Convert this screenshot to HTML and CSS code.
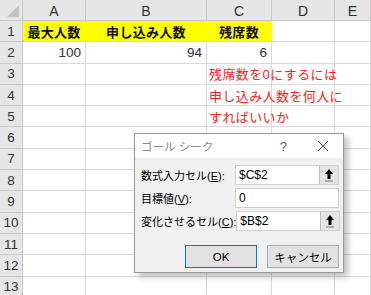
FILE: index.html
```html
<!DOCTYPE html>
<html lang="ja">
<head>
    <meta charset="UTF-8">
    <title>ゴール シーク</title>
    <link rel="stylesheet" href="styles.css">
</head>
<body>
    <div class="sheet">
        <div class="corner"><span class="tri"></span></div>
        <div class="colhead">A</div>
        <div class="colhead">B</div>
        <div class="colhead">C</div>
        <div class="colhead">D</div>
        <div class="colhead">E</div>

        <div class="rowhead">1</div>
        <div class="cell yellow">最大人数</div>
        <div class="cell yellow">申し込み人数</div>
        <div class="cell yellow">残席数</div>
        <div class="cell"></div>
        <div class="cell"></div>

        <div class="rowhead">2</div>
        <div class="cell num">100</div>
        <div class="cell num">94</div>
        <div class="cell num">6</div>
        <div class="cell"></div>
        <div class="cell"></div>

        <div class="rowhead">3</div>
        <div class="cell"></div>
        <div class="cell"></div>
        <div class="cell note">残席数を0にするには</div>
        <div class="cell"></div>
        <div class="cell"></div>

        <div class="rowhead">4</div>
        <div class="cell"></div>
        <div class="cell"></div>
        <div class="cell note">申し込み人数を何人に</div>
        <div class="cell"></div>
        <div class="cell"></div>

        <div class="rowhead">5</div>
        <div class="cell"></div>
        <div class="cell"></div>
        <div class="cell note">すればいいか</div>
        <div class="cell"></div>
        <div class="cell"></div>

        <div class="rowhead">6</div>
        <div class="cell"></div><div class="cell"></div><div class="cell"></div><div class="cell"></div><div class="cell"></div>
        <div class="rowhead">7</div>
        <div class="cell"></div><div class="cell"></div><div class="cell"></div><div class="cell"></div><div class="cell"></div>
        <div class="rowhead">8</div>
        <div class="cell"></div><div class="cell"></div><div class="cell"></div><div class="cell"></div><div class="cell"></div>
        <div class="rowhead">9</div>
        <div class="cell"></div><div class="cell"></div><div class="cell"></div><div class="cell"></div><div class="cell"></div>
        <div class="rowhead">10</div>
        <div class="cell"></div><div class="cell"></div><div class="cell"></div><div class="cell"></div><div class="cell"></div>
        <div class="rowhead">11</div>
        <div class="cell"></div><div class="cell"></div><div class="cell"></div><div class="cell"></div><div class="cell"></div>
        <div class="rowhead">12</div>
        <div class="cell"></div><div class="cell"></div><div class="cell"></div><div class="cell"></div><div class="cell"></div>
        <div class="rowhead">13</div>
        <div class="cell"></div><div class="cell"></div><div class="cell"></div><div class="cell"></div><div class="cell"></div>
    </div>

    <div class="dialog">
        <div class="titlebar">
            <span class="title">ゴール シーク</span>
            <span class="help">?</span>
            <span class="close">
                <svg width="12" height="12" viewBox="0 0 12 12"><path d="M1 1L11 11M11 1L1 11" stroke="#555" stroke-width="1"/></svg>
            </span>
        </div>
        <div class="body">
            <div class="field">
                <label>数式入力セル(<u>E</u>):</label>
                <div class="input">$C$2<span class="ref"><svg width="10" height="14" viewBox="0 0 10 14"><path d="M5 1L1 6H3.5V11H6.5V6H9Z" fill="#000"/><path d="M1 13H9" stroke="#777" stroke-width="1"/></svg></span></div>
            </div>
            <div class="field">
                <label>目標値(<u>V</u>):</label>
                <div class="input">0</div>
            </div>
            <div class="field">
                <label>変化させるセル(<u>C</u>):</label>
                <div class="input">$B$2<span class="ref"><svg width="10" height="14" viewBox="0 0 10 14"><path d="M5 1L1 6H3.5V11H6.5V6H9Z" fill="#000"/><path d="M1 13H9" stroke="#777" stroke-width="1"/></svg></span></div>
            </div>
            <div class="actions">
                <button class="btn default">OK</button>
                <button class="btn">キャンセル</button>
            </div>
        </div>
    </div>
</body>
</html>
```

FILE: styles.css
```css
body {
    margin: 0;
    font-family: "Liberation Sans", "Noto Sans CJK JP", sans-serif;
    background: #fff;
    overflow: hidden;
}

.sheet {
    display: grid;
    grid-template-columns: 23px 63px 121px 65px 63px 1fr;
    grid-template-rows: 21px repeat(13, 21.3px);
    width: 371px;
}

.corner,
.colhead,
.rowhead {
    background: #e6e6e6;
    color: #333;
    box-sizing: border-box;
    border-right: 1px solid #c8c8c8;
    border-bottom: 1px solid #c8c8c8;
    font-size: 14px;
}

.corner {
    position: relative;
}

.corner .tri {
    position: absolute;
    right: 3px;
    bottom: 3px;
    width: 0;
    height: 0;
    border-left: 12px solid transparent;
    border-bottom: 12px solid #c2c2c2;
}

.colhead {
    display: flex;
    align-items: center;
    justify-content: center;
    padding-top: 1px;
}

.rowhead {
    display: flex;
    align-items: center;
    justify-content: center;
    font-size: 13.5px;
}

.cell {
    box-sizing: border-box;
    border-right: 1px solid #dadada;
    border-bottom: 1px solid #dadada;
    font-size: 13px;
    display: flex;
    align-items: center;
    white-space: nowrap;
    overflow: visible;
    color: #222;
}

.yellow {
    background: #ffff00;
    border-right-color: #ffff00;
    border-bottom-color: #d8d8d8;
    justify-content: center;
    font-weight: bold;
    font-size: 13px;
    letter-spacing: 0.3px;
    color: #111;
}

.num {
    justify-content: flex-end;
    padding-right: 4px;
    font-size: 13.5px;
    color: #333;
}

.note {
    color: #ff2020;
    padding-left: 2px;
    letter-spacing: 0.4px;
    position: relative;
    z-index: 1;
}

.dialog {
    position: absolute;
    left: 134px;
    top: 133px;
    width: 210px;
    height: 140px;
    box-sizing: border-box;
    border: 1px solid #9a9a9a;
    background: #f0f0f0;
    box-shadow: 4px 4px 6px rgba(0, 0, 0, 0.25);
    z-index: 2;
    font-size: 12px;
    color: #000;
}

.titlebar {
    height: 24px;
    background: #fff;
    display: flex;
    align-items: center;
    padding-left: 6px;
    padding-right: 14px;
}

.title {
    flex: 1;
    color: #8a8a8a;
    font-size: 11.5px;
}

.help {
    color: #666;
    font-size: 13px;
    margin-right: 30px;
}

.close {
    display: flex;
}

.body {
    padding: 7px 4px 0 6px;
    display: flex;
    flex-direction: column;
    gap: 3px;
}

.field {
    display: flex;
    align-items: center;
    height: 20px;
}

.field label {
    flex: 1;
    font-size: 11px;
    white-space: nowrap;
}

.input {
    width: 104px;
    flex: none;
    height: 20px;
    box-sizing: border-box;
    background: #fff;
    border: 1px solid #d0d0d0;
    display: flex;
    align-items: center;
    padding-left: 3px;
    font-size: 12px;
    position: relative;
}

.ref {
    position: absolute;
    right: 0;
    top: 0;
    width: 19px;
    height: 18px;
    box-sizing: border-box;
    background: #e5e5e5;
    border-left: 1px solid #bdbdbd;
    display: flex;
    align-items: center;
    justify-content: center;
}

.actions {
    display: flex;
    justify-content: flex-end;
    gap: 10px;
    margin-top: 11px;
}

.btn {
    width: 72px;
    height: 23px;
    background: #e1e1e1;
    border: 1px solid #adadad;
    font-family: "Liberation Sans", "Noto Sans CJK JP", sans-serif;
    font-size: 11.5px;
    color: #000;
    padding: 0;
}

.btn.default {
    border: 1px solid #0078d7;
}
```
